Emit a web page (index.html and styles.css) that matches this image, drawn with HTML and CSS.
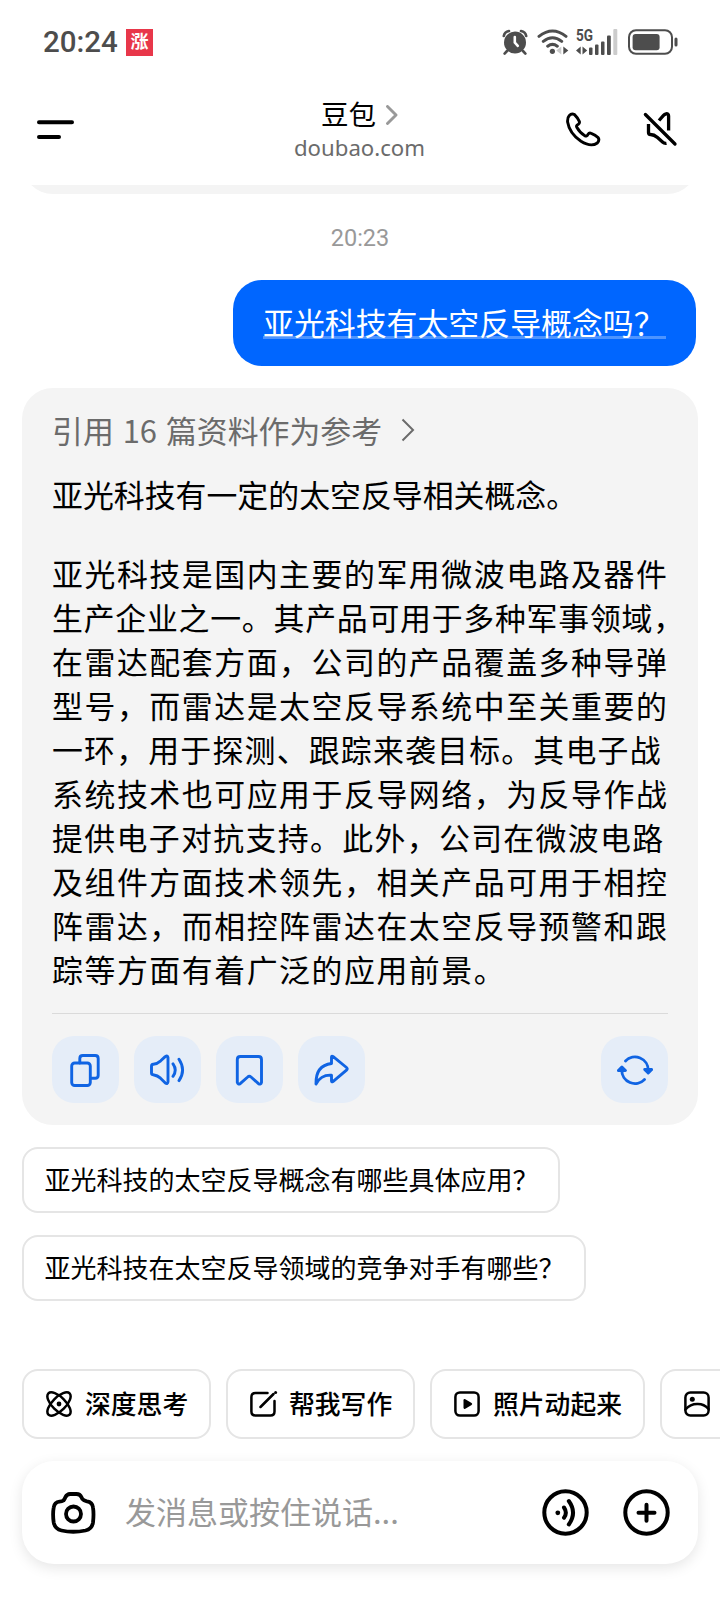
FILE: index.html
```html
<!DOCTYPE html>
<html lang="zh-CN">
<head>
<meta charset="utf-8">
<title>豆包</title>
<link rel="stylesheet" href="styles.css">
</head>
<body>
<div class="status">
  <div class="status-left"><span class="clock">20:24</span><span class="stamp">涨</span></div>
  <div class="status-right">
    <svg width="26" height="26" viewBox="0 0 26 26" fill="none" stroke="#4d4d4d" stroke-linecap="round"><circle cx="13" cy="13.5" r="11" fill="#4d4d4d" stroke="none"/><path d="M1.8 7Q2.5 2.8 7 2M24.2 7Q23.5 2.8 19 2M5 22l-2.4 2.6M21 22l2.4 2.6" stroke-width="2.6"/><path d="M12.8 8v5.5l3 3.4" stroke="#fff" stroke-width="2.6"/></svg>
    <svg class="wifi" width="32" height="26" viewBox="0 0 32 26" fill="none" stroke="#4d4d4d" stroke-width="3" stroke-linecap="round"><path d="M2 7.4Q15.500 -3.400 29 7.400M6.300 12.400Q15.500 5 24.700 12.400M10.700 17.200Q15.500 13.500 20.300 17.200"/><circle cx="15.400" cy="22.300" r="2.600" fill="#4d4d4d" stroke="none"/><path d="M24.300 17.500v8l-5-4z" fill="#ccc" stroke="none"/><path d="M26.300 17.500v8l5-4z" fill="#4d4d4d" stroke="none"/></svg>
    <svg class="cell" width="42" height="38" viewBox="0 -6 42 38" fill="#4d4d4d"><text x="0" y="12" class="net" textLength="17" lengthAdjust="spacingAndGlyphs">5G</text><path d="M4.700 17.500v8L0 21.500zM6.500 17.500v8l4.700-4z"/><rect x="13" y="18.500" width="3.500" height="7.500" rx="1"/><rect x="19" y="15.500" width="3.500" height="10.500" rx="1"/><rect x="25" y="12.500" width="3.500" height="13.500" rx="1"/><rect x="31" y="6.500" width="3.800" height="19.500" rx="1"/><rect x="37.300" y="0" width="4" height="26" rx="1" fill="#ccc"/></svg>
    <svg width="51" height="26" viewBox="0 0 51 26"><rect x="1" y="1.200" width="43" height="23.600" rx="7" fill="none" stroke="#4d4d4d" stroke-width="2"/><rect x="4.600" y="5" width="27" height="16.300" rx="3" fill="#4d4d4d"/><rect x="46.500" y="8.500" width="3" height="9" rx="1.500" fill="#4d4d4d"/></svg>
  </div>
</div>
<header class="header">
  <div class="side"><svg width="38" height="20" viewBox="0 0 38 20" stroke="#000" stroke-width="4" stroke-linecap="round"><path d="M3 2.200h33M3 17h20"/></svg></div>
  <div class="title">
    <div class="name">豆包<svg width="12" height="20" viewBox="0 0 12 20" fill="none" stroke="#999" stroke-width="2.900" stroke-linecap="round" stroke-linejoin="round"><path d="M1.500 1.500L10 10l-8.500 8.500"/></svg></div>
    <div class="domain">doubao.com</div>
  </div>
  <div class="side actions">
    <svg width="35" height="35" viewBox="0 0 35 35" fill="none" stroke="#000" stroke-width="2.900" stroke-linejoin="round"><path d="M3.300 3.600Q5.500.800 8.500 2.600Q11.500 5.500 13.300 9.300Q14 11 12.300 12.200Q9.800 13.500 10.800 15.300Q14 21 18.800 23.700Q20.700 24.800 22 22.300Q23.200 20.500 25.200 21.300Q29.500 22.800 32 25.500Q34 28 31.300 31Q25 35.500 15 29.300Q3.500 21.500 1.600 10Q1.300 5.700 3.300 3.600Z"/></svg>
    <svg width="35" height="35" viewBox="0 0 35 35" fill="none" stroke="#000" stroke-width="3.300" stroke-linecap="round" stroke-linejoin="round"><path d="M2.400 2.500L32 32"/><path stroke-linecap="butt" d="M16 8.500l4.500-5.200q1-1.100 2.600-1.500q2.500-.300 2.500 2.200v14.500M5.500 12v8.500q0 2 2 2q3.500 0 7 3l5 4.500q1.800 1.700 4 1.300"/></svg>
  </div>
</header>
<main class="chat">
  <div class="previous"><div class="previous-card"></div></div>
  <div class="time">20:23</div>
  <div class="bubble"><span class="question">亚光科技有太空反导概念吗？</span></div>
  <article class="answer">
    <div class="refs">引用 16 篇资料作为参考<svg width="14" height="24" viewBox="0 0 14 24" fill="none" stroke="#6b6b6b" stroke-width="2"><path d="M1.500 1.500L12 12 1.500 22.500"/></svg></div>
    <p class="lead">亚光科技有一定的太空反导相关概念。</p>
    <p class="body">
      <span class="line">亚光科技是国内主要的军用微波电路及器件</span>
      <span class="line packed">生产企业之一。其产品可用于多种军事领域，</span>
      <span class="line">在雷达配套方面，公司的产品覆盖多种导弹</span>
      <span class="line">型号，而雷达是太空反导系统中至关重要的</span>
      <span class="line snug">一环，用于探测、跟踪来袭目标。其电子战</span>
      <span class="line">系统技术也可应用于反导网络，为反导作战</span>
      <span class="line close">提供电子对抗支持。此外，公司在微波电路</span>
      <span class="line">及组件方面技术领先，相关产品可用于相控</span>
      <span class="line">阵雷达，而相控阵雷达在太空反导预警和跟</span>
      <span class="line">踪等方面有着广泛的应用前景。</span>
    </p>
    <div class="tools">
      <span class="tool"><svg width="36" height="36" viewBox="0 0 36 36"><path d="M11.800 11V6.500q0-3 3-3h12.400q3 0 3 3v16.700q0 3-3 3h-4.700"/><rect x="3.700" y="11" width="18.600" height="22.500" rx="3"/></svg></span>
      <span class="tool"><svg width="36" height="36" viewBox="0 0 36 36"><path d="M1.500 14.300q0-1.800 1.800-2q3.700-.300 7.400-3.500l4.500-4.200q2.600-1.700 2.800 1v24.300q-.400 2.800-2.900.900l-4.600-4.600q-3.200-2.800-6.500-3.200q-2.500-.200-2.500-2z"/><path d="M23 11.800q4.500 6.200 0 12.500M29 7.300q7.200 10.800 0 21.300"/></svg></span>
      <span class="tool"><svg width="36" height="36" viewBox="0 0 36 36"><path d="M5.300 7.500q0-3 3-3h18.200q3 0 3 3v22.800q-.700 2.700-3 1.400L19 25q-1.700-1.500-3.300 0l-7.500 6.700q-2.200 1.200-2.900-1.400z"/></svg></span>
      <span class="tool"><svg width="36" height="36" viewBox="0 0 36 36"><path d="M17.500 5.200q0-1.600 1.400-.800L32.500 15.500q1.500 1.300 0 2.600L18.900 29.600q-1.400.900-1.400-.800v-5.600Q7 22.500 2 32Q1.500 13.500 17.500 11.500Z"/></svg></span>
      <span class="tool last"><svg width="36" height="36" viewBox="0 0 36 36"><path d="M8.500 9A13.200 13.200 0 0 1 31.200 18.500M27.500 27.500A13.200 13.200 0 0 1 4.800 18"/><path class="solid" d="M27.700 17.500l3.500 3.500 3.500-3.500zM1.400 18.500l3.500-3.500 3.500 3.500z"/></svg></span>
    </div>
  </article>
  <div class="suggest first">亚光科技的太空反导概念有哪些具体应用？</div>
  <div class="suggest second">亚光科技在太空反导领域的竞争对手有哪些？</div>
</main>
<nav class="skills">
  <span class="skill"><svg width="26" height="26" viewBox="0 0 26 26"><ellipse cx="13" cy="13" rx="15" ry="6.700" transform="rotate(45 13 13)"/><ellipse cx="13" cy="13" rx="15" ry="6.700" transform="rotate(-45 13 13)"/><circle class="dot" cx="13" cy="13" r="2.400"/></svg><span>深度思考</span></span>
  <span class="skill"><svg width="28" height="26" viewBox="0 0 28 26"><path d="M17.500 2H5.500Q1.400 2 1.400 6v14.500q0 4 4.100 4h15q4 0 4-4V10M10.500 16L23.500 3"/><circle class="dot" cx="25.600" cy="1.500" r="1.500"/></svg><span>帮我写作</span></span>
  <span class="skill"><svg width="26" height="26" viewBox="0 0 26 26"><rect x="1.400" y="1.400" width="23.200" height="23.200" rx="4.500"/><path class="dot" d="M9.500 9.500q0-2 1.800-1.200l6.300 3.700q1.300 1 0 2l-6.300 3.700q-1.800.800-1.800-1.200z"/></svg><span>照片动起来</span></span>
  <span class="skill"><svg width="26" height="26" viewBox="0 0 26 26"><rect x="1.400" y="1.400" width="23.200" height="23.200" rx="5"/><circle class="dot" cx="8.300" cy="8.300" r="2.500"/><path d="M1.500 18.500Q6.500 12.800 13.500 13Q20 12.800 24.500 18"/></svg></span>
</nav>
<footer class="composer">
  <svg width="45" height="42" viewBox="0 0 45 42" stroke-width="3.800"><path d="M12.500 8.500Q13.800 6.800 14.500 5Q16 2.200 19 2h6.500q3.500 0 5 3.200Q31 7.200 32.800 8.200Q34 9 36 9.300Q41.500 10 42 15.500Q43 22 42 30.500Q41 37 34.500 38.500Q22 41 10.500 38.500Q4 37 2.700 30.500Q1.500 22 2.700 15.500Q3.500 10 8.500 9.600Q11 9.500 12.500 8.500Z"/><circle cx="22.500" cy="22" r="7.500"/></svg>
  <span class="placeholder">发消息或按住说话...</span>
  <svg class="voice" width="47" height="47" viewBox="0 0 47 47" stroke-width="4"><circle cx="23.500" cy="23.500" r="21.200"/><circle class="dot" cx="15.800" cy="23.800" r="2.400"/><path d="M22 18.500q3.700 5.300 0 10.200M26.800 12q8.500 11.800 0 23.500"/></svg>
  <svg width="47" height="47" viewBox="0 0 47 47" stroke-width="4"><circle cx="23.500" cy="23.500" r="21.200"/><path d="M15.500 23.700h16M23.500 15.700v16"/></svg>
</footer>
</body>
</html>
```

FILE: styles.css
```css
* { box-sizing: border-box; }
body {
  margin: 0;
  width: 720px;
  height: 1610px;
  overflow: hidden;
  background: #fff;
  color: #000;
  font-family: "Noto Sans CJK SC", sans-serif;
  display: flex;
  flex-direction: column;
}
svg { display: block; flex: none; }
p { margin: 0; }

.status {
  height: 84px;
  padding: 0 41px 0 43px;
  display: flex;
  justify-content: space-between;
  align-items: center;
  flex: none;
}
.status-left, .status-right { display: flex; align-items: center; }
.clock {
  font: 500 29.500px/32px Roboto, sans-serif;
  width: 83px;
  color: #4d4d4d;
}
.stamp {
  width: 27px;
  height: 27px;
  background: #e8374a;
  color: #fff;
  font-size: 18px;
  font-weight: 700;
  line-height: 23px;
  text-align: center;
}
.wifi { margin-left: 9px; }
.cell { margin: 0 10px 0 7px; }
.net { font: 700 16.500px Roboto, sans-serif; }

.header {
  height: 101px;
  padding: 0 42px 0 36px;
  display: flex;
  justify-content: space-between;
  flex: none;
}
.side { width: 112px; padding-top: 36px; }
.actions {
  display: flex;
  justify-content: space-between;
  padding-top: 28px;
}
.title { margin-left: 5px; padding-top: 10px; }
.name {
  display: flex;
  align-items: center;
  justify-content: center;
  gap: 10px;
  font-size: 27.500px;
  line-height: 38px;
}
.name svg { margin-top: 3px; }
.domain {
  margin-top: 2px;
  font: 22.200px/28px "Noto Sans", sans-serif;
  color: #6b6b6b;
  text-align: center;
}

.chat { padding: 0 22px; display: flex; flex-direction: column; flex: none; }
.previous {
  height: 9px;
  overflow: hidden;
  display: flex;
  align-items: flex-end;
}
.previous-card { width: 100%; height: 70px; flex: none; background: #f4f4f4; border-radius: 31px; }
.time {
  margin-top: 29px;
  font: 23.500px/30px Roboto, sans-serif;
  color: #999;
  text-align: center;
}
.bubble {
  align-self: flex-end;
  width: 463px;
  height: 86px;
  margin: 27px 2px 0 0;
  padding: 20px 30px;
  border-radius: 29px;
  background: #06f;
  color: #fff;
}
.question {
  display: block;
  height: 39px;
  border-bottom: 3px solid #4d94ff;
  font-size: 30.900px;
  line-height: 44px;
  white-space: nowrap;
}
.answer {
  height: 737px;
  margin-top: 22px;
  padding: 20px 30px;
  border-radius: 31px;
  background: #f4f4f4;
  font-size: 30.900px;
  line-height: 44px;
  white-space: nowrap;
}
.refs {
  display: flex;
  align-items: center;
  gap: 19px;
  color: #6b6b6b;
  word-spacing: 2px;
}
.lead { margin-top: 20px; }
.body { margin-top: 35px; }
.line { display: block; letter-spacing: 1.550px; }
.packed { letter-spacing: 0.750px; }
.snug { letter-spacing: 1.200px; }
.close { letter-spacing: 1.350px; }
.tools {
  margin-top: 22px;
  padding-top: 22px;
  border-top: 1px solid #dadada;
  display: flex;
  gap: 15px;
}
.tool {
  width: 67px;
  height: 67px;
  border-radius: 22px;
  background: #e5edf8;
  display: flex;
  align-items: center;
  justify-content: center;
}
.tool svg {
  fill: none;
  stroke: #1064e3;
  stroke-width: 2.900;
  stroke-linecap: round;
  stroke-linejoin: round;
}
.tool .solid { fill: #1064e3; }
.last { margin-left: auto; }

.suggest {
  height: 66px;
  margin-top: 22px;
  padding: 0 20.500px;
  border: 2px solid #e5e5e5;
  border-radius: 16px;
  font-size: 26px;
  line-height: 60px;
  white-space: nowrap;
}
.first { width: 538px; }
.second { width: 564px; }

.skills {
  margin: 68px 0 0 22px;
  display: flex;
  gap: 15px;
  overflow: hidden;
  flex: none;
}
.skill {
  height: 70px;
  padding: 0 20px 0 22px;
  border: 2px solid #e5e5e5;
  border-radius: 16px;
  display: flex;
  align-items: center;
  gap: 13px;
  flex: none;
  font-size: 25.800px;
  font-weight: 500;
  white-space: nowrap;
}
.skill span { padding-bottom: 3px; }
.skill:nth-child(-n+2) { width: 189px; }
.skill:nth-child(2) { gap: 11px; }
.skill:nth-child(3) { width: 219px; width: 215px; }
.skill:last-child { width: 190px; }
.skill svg, .composer svg {
  fill: none;
  stroke: #000;
  stroke-linecap: round;
  stroke-linejoin: round;
}
.skill svg { stroke-width: 2.500; }
.skill .dot, .composer .dot { fill: #000; stroke: none; }

.composer {
  height: 103px;
  margin: 22px 22px 0;
  padding: 0 28px 0 29px;
  border-radius: 32px;
  background: #fff;
  box-shadow: 0 4px 14px rgba(0, 0, 0, 0.1);
  display: flex;
  align-items: center;
  flex: none;
}
.placeholder {
  flex: 1;
  margin-left: 29px;
  padding-bottom: 4px;
  color: #999;
  font-size: 31px;
  line-height: 44px;
}
.voice { margin-right: 34px; }
```
